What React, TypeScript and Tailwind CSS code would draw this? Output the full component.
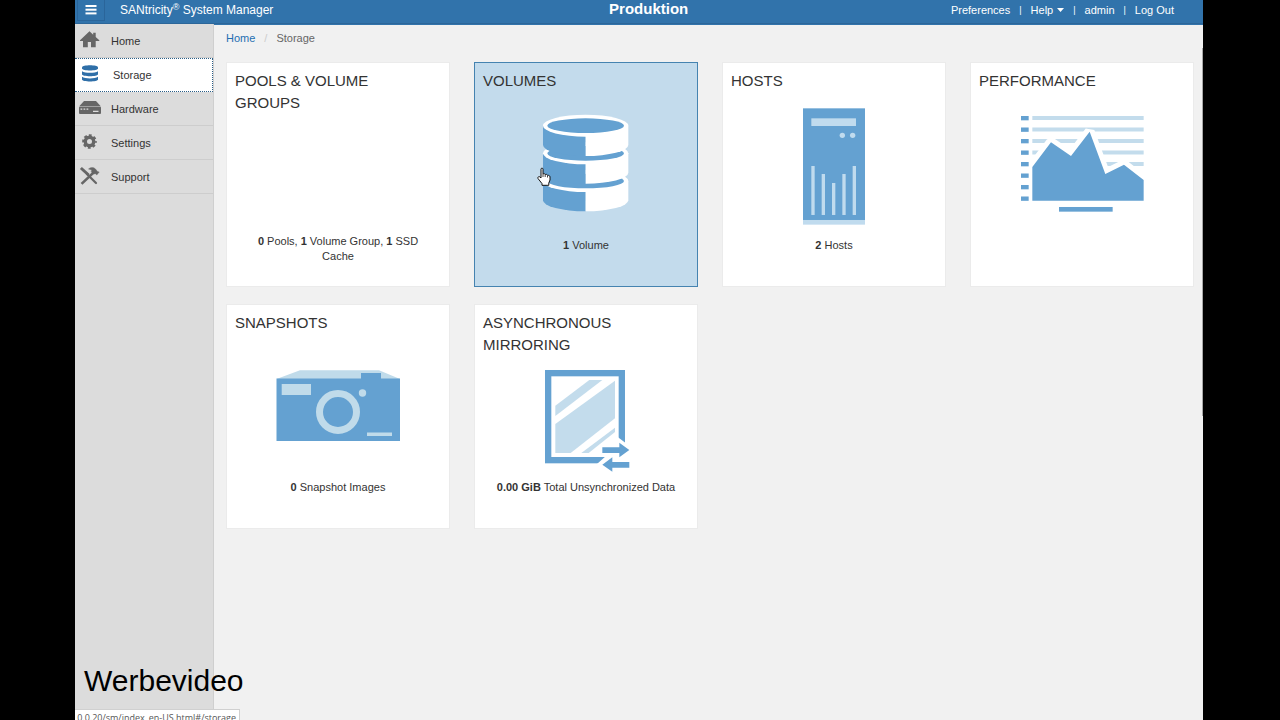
import React from 'react';

const MenuIcon = () => (
    <svg width="12" height="10" viewBox="0 0 12 10" fill="#fff">
        <rect x="0.5" y="0" width="11" height="2" />
        <rect x="0.5" y="3.7" width="11" height="2" />
        <rect x="0.5" y="7.4" width="11" height="2" />
    </svg>
);

const HomeIcon = () => (
    <svg className="mb-0.5" width="22" height="20" viewBox="0 0 22 20" fill="#666">
        <path d="M10.5 1.2 L1 10.3 V11 H4 V17.3 H8.8 V12 H12 V17.3 H16.7 V11 H20.3 V10.3 L16.7 7 V2.8 H14.2 V4.8 Z" />
    </svg>
);

const StorageIcon = () => (
    <svg className="mb-0.5" width="22" height="20" viewBox="0 0 22 20" fill="#2f6fa8">
        <path d="M3 3.4 C3 0.6 19 0.6 19 3.4 V4.6 C19 7.2 3 7.2 3 4.6 Z" />
        <path d="M3 7.2 C6 9.4 16 9.4 19 7.2 V10.2 C19 12.8 3 12.8 3 10.2 Z" />
        <path d="M3 12.8 C6 15 16 15 19 12.8 V15.6 C19 18.2 3 18.2 3 15.6 Z" />
    </svg>
);

const HardwareIcon = () => (
    <svg className="mb-0.5" width="22" height="20" viewBox="0 0 22 20">
        <path d="M5 3 H17 L21.5 8 H0.5 Z" fill="#666" />
        <rect y="8.6" width="22" height="7.4" rx="1" fill="#666" />
        <path d="M1.5 11.2 H3.3 M4.5 11.2 H6.3 M7.5 11.2 H9.3 M14 13.4 H19.5" stroke="#ddd" strokeWidth="1.3" />
    </svg>
);

const SettingsIcon = () => (
    <svg className="mb-0.5" width="22" height="20" viewBox="0 0 22 20">
        <circle cx="10.5" cy="9.5" r="4.2" fill="none" stroke="#666" strokeWidth="3.4" />
        <circle cx="10.5" cy="9.5" r="6.2" fill="none" stroke="#666" strokeWidth="2.2" strokeDasharray="2.8 2.07" strokeDashoffset="1.4" />
    </svg>
);

const SupportIcon = () => (
    <svg className="mb-0.5" width="22" height="20" viewBox="0 0 22 20" fill="#666" stroke="#666">
        <path d="M3 3 L8.5 8" strokeWidth="3" strokeLinecap="square" />
        <path d="M8 8 L17 17" strokeWidth="2.2" strokeLinecap="round" />
        <path d="M14 7 L3.5 17" strokeWidth="2.6" strokeLinecap="square" />
        <path d="M9.5 3 C12 1 14.5 1.2 16.5 3 L18.5 5.6 L20.2 6 L17.8 9 L16.5 7.8 L14 8 L12.2 5.6 L12.8 4 Z" strokeWidth="0.4" />
    </svg>
);

const VolumesArt = () => (
    <g transform="translate(-54 -53) scale(0.3333)">
        {[378, 295, 212].map((y) => (
            <g key={y}>
                <path d={`M219 ${y} V${y + 58} A128 33 0 0 0 347 ${y + 91} V${y} Z`} fill="#64a1d1" />
                <path d={`M475 ${y} V${y + 58} A128 33 0 0 1 347 ${y + 91} V${y} Z`} fill="#fff" />
                <ellipse cx="347" cy={y} rx="128" ry="33" fill="#fff" />
                <ellipse cx="347" cy={y} rx="115" ry="22" fill="#64a1d1" />
            </g>
        ))}
    </g>
);

const HostsArt = () => (
    <g transform="translate(18 -13) scale(0.3333)" fill="#c0dbee">
        <rect x="39" y="40" width="186" height="336" fill="#64a1d1" />
        <rect x="39" y="375" width="186" height="14" />
        <rect x="64" y="70" width="134" height="23" />
        <circle cx="157" cy="121" r="8" />
        <circle cx="188" cy="121" r="8" />
        <rect x="64" y="213" width="10" height="147" />
        <rect x="95" y="237" width="10" height="123" />
        <rect x="126" y="264" width="10" height="96" />
        <rect x="157" y="237" width="10" height="123" />
        <rect x="188" y="213" width="10" height="147" />
    </g>
);

const PerformanceArt = () => (
    <g transform="translate(-15 -8) scale(0.3333)">
        {[0, 1, 2, 3, 4, 5, 6, 7].map((i) => (
            <rect key={i} x="48" y={48 + i * 34.5} width="23" height="13" fill="#64a1d1" />
        ))}
        {[0, 1, 2, 3, 4].map((i) => (
            <rect key={i} x="82" y={48 + i * 34.5} width="334" height="12" fill="#c3dcec" />
        ))}
        <path d="M82 302 V201 L138 127 L198 168 L254 95 L301 222 L357 194 L416 240 V302 Z" fill="#fff" stroke="#fff" strokeWidth="30" strokeLinejoin="bevel" clipPath="url(#plot)" />
        <clipPath id="plot">
            <rect x="76" y="40" width="346" height="264" />
        </clipPath>
        <path d="M82 302 V201 L138 127 L198 168 L254 95 L301 222 L357 194 L416 240 V302 Z" fill="#64a1d1" />
        <rect x="162" y="321" width="161" height="14" fill="#64a1d1" />
    </g>
);

const SnapshotsArt = () => (
    <g fill="#c0dbea">
        <path d="M0.5 29 L24 20.3 H103 L124 29 Z" />
        <path d="M0.5 28.5 H85 V23 H105 V28.5 H124 V91 H0.5 Z" fill="#64a1d1" />
        <rect x="5.7" y="34" width="29.3" height="11" />
        <circle cx="62" cy="62" r="18.5" fill="none" stroke="#c0dbea" strokeWidth="7" />
        <circle cx="86.5" cy="43" r="3.7" />
        <rect x="91" y="82.5" width="25" height="3.5" />
    </g>
);

const MirrorArt = () => (
    <g transform="translate(6 10) scale(0.3333)">
        <rect x="54.5" y="39.5" width="221" height="261" fill="#fff" stroke="#64a1d1" strokeWidth="19" />
        <g fill="#c3dcec">
            <path d="M76 137 L178 60 H217 L76 168 Z" />
            <path d="M76 192 L255 62 V175 L122 279 H76 Z" />
            <path d="M154 279 L255 203 V216 L176 279 Z" />
        </g>
        {/* the frame is open at the corner where the arrows sit */}
        <path d="M264 232 L288 250 V313 H200 L228 288 H208 V255 H264 Z" fill="#fff" />
        <path d="M217 262 H268 V248 L298 270 L268 292 V279 H217 Z M298 306 H247 V292 L217 314 L247 335 V323 H298 Z" fill="#64a1d1" />
    </g>
);

const HandCursor = () => (
    <svg className="absolute left-[62px] top-[104px] z-10" width="16" height="20" viewBox="0 0 16 20">
        <path
            d="M4 2.2 C4 0.7 6 0.7 6 2.2 V7 C6.8 6.3 8 6.6 8.2 7.6 C9 7 10.2 7.3 10.5 8.4 C11.4 8 12.8 8.5 13 9.8 V13 L11.8 16 V18.3 H5 V16.6 L1 11.5 C0.4 10 2 9 3 10 L4 11 Z"
            fill="#fff"
            stroke="#111"
            strokeWidth="1"
        />
        <path d="M8.2 8 V10 M10.5 8.8 V10.5 M6 7 V10" stroke="#111" strokeWidth="0.8" />
    </svg>
);

const navItems = [
    { label: 'Home', icon: HomeIcon },
    { label: 'Storage', icon: StorageIcon, active: true },
    { label: 'Hardware', icon: HardwareIcon },
    { label: 'Settings', icon: SettingsIcon },
    { label: 'Support', icon: SupportIcon },
];

interface Tile {
    title: string;
    art?: React.FC;
    summary?: React.ReactNode;
    hovered?: boolean;
}

const tiles: Tile[] = [
    { title: 'POOLS & VOLUME GROUPS', summary: <><b>0</b> Pools, <b>1</b> Volume Group, <b>1</b> SSD<br />Cache</> },
    { title: 'VOLUMES', art: VolumesArt, summary: <><b>1</b> Volume</>, hovered: true },
    { title: 'HOSTS', art: HostsArt, summary: <><b>2</b> Hosts</> },
    { title: 'PERFORMANCE', art: PerformanceArt },
    { title: 'SNAPSHOTS', art: SnapshotsArt, summary: <><b>0</b> Snapshot Images</> },
    { title: 'ASYNCHRONOUS MIRRORING', art: MirrorArt, summary: <><b>0.00 GiB</b> Total Unsynchronized Data</> },
];

const TileCard = ({ title, art: Art, summary, hovered }: Tile) => (
    <a
        href="#/storage"
        className={`relative flex h-[225px] flex-col border px-2 pt-[7px] ${hovered ? 'border-[#4583b0] bg-[#c3dbec]' : 'border-[#ebebeb] bg-white'}`}
    >
        <h2 className="h-[38px] pr-6 text-[15px] leading-[22px] text-[#333]">{title}</h2>
        <svg className="shrink-0 self-center" width="124" height="125" viewBox="0 0 124 125">
            {Art && <Art />}
        </svg>
        <p className={`text-center leading-[15px] text-[#333] ${Art ? 'mt-[5px]' : 'mt-px'}`}>{summary}</p>
        {hovered && <HandCursor />}
    </a>
);

export default function App() {
    return (
        <div className="h-screen overflow-hidden bg-black pl-[75px] pr-[77px] font-['Liberation_Sans',Arial,sans-serif] text-[11px]">
            <div className="relative flex h-full flex-col overflow-hidden bg-[#f1f1f1]">
                <header className="flex h-6 shrink-0 items-start border-b border-[#2c6699] bg-[#3173ab] text-white">
                    <button aria-label="Menu" className="ml-0.5 flex h-[21px] w-7 items-center justify-center border border-t-0 border-[#2a659a]">
                        <MenuIcon />
                    </button>
                    <div className="ml-[15px] text-[12px] leading-[21px]">
                        SANtricity<span className="relative -top-1 text-[9px]">®</span> System Manager
                    </div>
                    <h1 className="flex-1 pl-[73px] text-center text-[15px] font-bold leading-[18px]">Produktion</h1>
                    <nav className="flex items-center gap-[9px] pr-[29px] leading-5">
                        <a href="#/preferences">Preferences</a>
                        <span className="text-[9px]">|</span>
                        <button className="flex items-center gap-1">
                            Help
                            <svg width="7" height="4" viewBox="0 0 7 4" fill="#fff"><path d="M0 0 H7 L3.5 4 Z" /></svg>
                        </button>
                        <span className="text-[9px]">|</span>
                        <span>admin</span>
                        <span className="text-[9px]">|</span>
                        <a href="#/logout">Log Out</a>
                    </nav>
                </header>

                <div className="flex min-h-0 flex-1">
                    <aside className="w-[139px] shrink-0 border-r border-[#cfcfcf] bg-[#dcdcdc]">
                        {navItems.map(({ label, icon: Icon, active }) => (
                            <a
                                key={label}
                                href="#/storage"
                                className={`flex h-[34px] items-center pl-1 text-[#333] ${active ? 'border border-l-0 border-dotted border-[#2b5f88] bg-white' : 'border-b border-[#cdcdcd]'}`}
                            >
                                <Icon />
                                <span className={active ? 'pl-3' : 'pl-[10px] pt-px'}>{label}</span>
                            </a>
                        ))}
                    </aside>

                    <main className="min-w-0 flex-1 border-t border-[#3173ab] pl-3 pr-[9px]">
                        <nav className="flex h-[37px] items-start gap-[9px] leading-[27px] text-[#666]">
                            <a href="#/home" className="text-[#1f6fb2]">Home</a>
                            <span className="text-[#ccc]">/</span>
                            <span>Storage</span>
                        </nav>
                        <div className="grid grid-cols-4 gap-x-6 gap-y-[17px]">
                            {tiles.map((t) => (
                                <TileCard key={t.title} {...t} />
                            ))}
                        </div>
                    </main>
                </div>

                {/* scroll thumb */}
                <div className="absolute right-0 top-12 h-[368px] w-px bg-[#a8a8a8]" />

                {/* video caption */}
                <div className="absolute bottom-[22px] left-[9px] text-[30px] leading-[34px] text-black">Werbevideo</div>

                {/* browser link preview */}
                <div className="absolute bottom-0 left-0 flex h-[11px] w-[165px] justify-end overflow-hidden border-r border-t border-[#d0d0d0] bg-white pr-[3px] font-['Open_Sans',sans-serif] text-[9px] leading-4 text-[#555]">
                    <span className="whitespace-nowrap">0.0.20/sm/index_en-US.html#/storage</span>
                </div>
            </div>
        </div>
    );
}
